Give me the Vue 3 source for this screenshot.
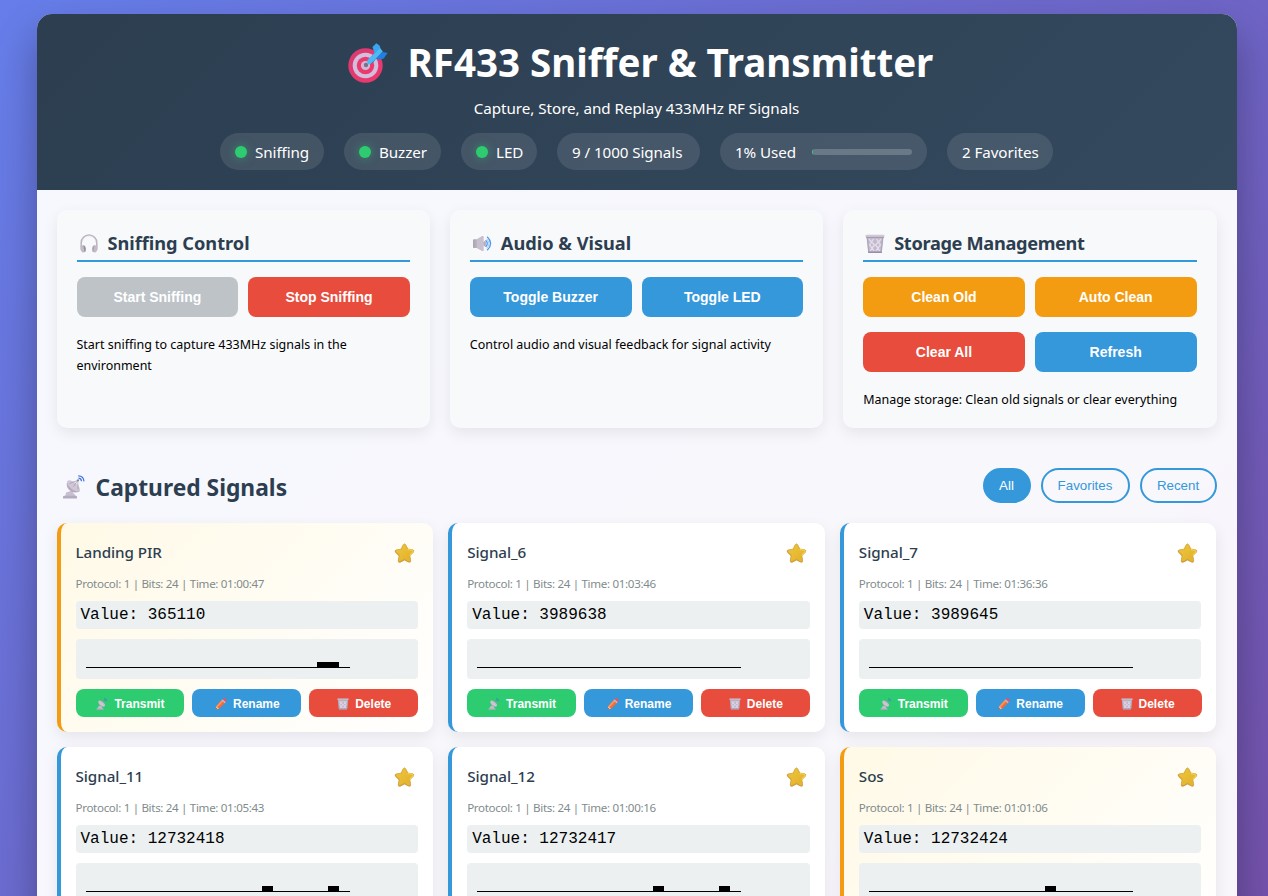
<script setup>
const statuses = [
  { label: 'Sniffing', width: 104, dot: true },
  { label: 'Buzzer', width: 97, dot: true },
  { label: 'LED', width: 76, dot: true },
  { label: '9 / 1000 Signals', width: 143 },
  { label: '1% Used', width: 207, bar: true },
  { label: '2 Favorites', width: 106 },
]

const panels = [
  {
    icon: 'headphones',
    title: 'Sniffing Control',
    rows: [[['Start Sniffing', 'disabled'], ['Stop Sniffing', 'danger']]],
    text: 'Start sniffing to capture 433MHz signals in the environment',
  },
  {
    icon: 'speaker',
    title: 'Audio & Visual',
    rows: [[['Toggle Buzzer', 'primary'], ['Toggle LED', 'primary']]],
    text: 'Control audio and visual feedback for signal activity',
  },
  {
    icon: 'bin',
    title: 'Storage Management',
    rows: [
      [['Clean Old', 'warning'], ['Auto Clean', 'warning']],
      [['Clear All', 'danger'], ['Refresh', 'primary']],
    ],
    text: 'Manage storage: Clean old signals or clear everything',
  },
]

const signals = [
  { name: 'Landing PIR', time: '01:00:47', value: 365110, favorite: true, pulses: [21, 22] },
  { name: 'Signal_6', time: '01:03:46', value: 3989638, pulses: [] },
  { name: 'Signal_7', time: '01:36:36', value: 3989645, pulses: [] },
  { name: 'Signal_11', time: '01:05:43', value: 12732418, pulses: [16, 22] },
  { name: 'Signal_12', time: '01:00:16', value: 12732417, pulses: [16, 22] },
  { name: 'Sos', time: '01:01:06', value: 12732424, favorite: true, pulses: [16] },
]
</script>

<template>
  <div class="page">
    <svg class="defs" aria-hidden="true">
      <defs>
        <linearGradient id="g-cone" x1="0" x2="1"><stop offset="0" stop-color="#aaa5b0" /><stop offset="1" stop-color="#d8d0de" /></linearGradient>
        <linearGradient id="g-star" x1="0" y1="0" x2="1" y2="1"><stop offset="0" stop-color="#efc63a" /><stop offset="1" stop-color="#e0b02c" /></linearGradient>
        <linearGradient id="g-ring" x1="0" y1="0" x2="1" y2="1"><stop offset="0" stop-color="#d83b72" /><stop offset="1" stop-color="#f0386c" /></linearGradient>
      </defs>
      <symbol id="target" viewBox="0 0 40 40">
        <circle cx="17.5" cy="22.5" r="17.2" fill="url(#g-ring)" />
        <circle cx="17.5" cy="22.5" r="12.8" fill="#d2bedd" />
        <circle cx="17.5" cy="22.5" r="8.7" fill="#ec3a6e" />
        <circle cx="17.5" cy="22.5" r="4.6" fill="#cdbbd6" />
        <circle cx="18" cy="22" r="2.2" fill="#7d6f88" />
        <path d="M19.500 17L26.500 10l-2-6L28.300.3l3.200 2.200 1.200 3.500-1.400 4.400-8.500 9.600z" fill="#3aa6f0" />
        <path d="M22.500 20.600l9-9.500 3.300-2 4.800.9-3.900 5.400-4 1.100-3.800-.6-3.200 4.200z" fill="#1f80e2" />
        <path d="M19.300 17.500L32 5.300l2.800 2.900L22.500 20.900q-4 1.200-3.200-3.400z" fill="#4fb9f2" />
      </symbol>
      <symbol id="headphones" viewBox="0 0 20 20">
        <path d="M2.200 13V8.800a7.800 7.800 0 0 1 15.600 0V13" fill="none" stroke="#b9b3be" stroke-width="1.500" />
        <path d="M3.200 8.600a6.800 6.800 0 0 1 13.600 0" fill="none" stroke="#ddd8e2" stroke-width=".6" />
        <path d="M1.300 12.200l3-1.200 2.200 6.600-2.600 1.200Q2 18 1.300 15z" fill="#c3bcc8" />
        <path d="M4.300 11.300q2.100-.3 2.500 3t-1.200 3.900z" fill="#968e9d" />
        <path d="M18.700 12.200l-3-1.200-2.200 6.600 2.600 1.200Q18 18 18.700 15z" fill="#c3bcc8" />
        <path d="M15.700 11.300q-2.100-.3-2.500 3t1.200 3.900z" fill="#aca4b3" />
      </symbol>
      <symbol id="speaker" viewBox="0 0 20 20">
        <path d="M1 6q0-.8.8-.8H5L10.300 2q1.200-.4 1.200.8v13.400q0 1.200-1.200.8L5 14H1.800Q1 14 1 13.200z" fill="url(#g-cone)" />
        <path d="M5 5.200L10.300 2q1.200-.4 1.200.8v13.400q0 1.200-1.200.8L5 14z" fill="#c9c0cf" />
        <ellipse cx="12.700" cy="9.600" rx="1.300" ry="2.700" fill="#b3aabc" />
        <path d="M13.600 6.200q3.400 3.300 0 6.700M15.200 2.800q6.800 6.700 0 13.500" fill="none" stroke="#4d98ee" stroke-width="1.300" />
        <path d="M14.700 4.900q4.600 4.700 0 9.400" fill="none" stroke="#8bbcf4" stroke-width=".8" />
      </symbol>
      <symbol id="bin" viewBox="0 0 20 20">
        <path d="M1.400 3h17.200l-1.800 16H3.200z" fill="#c3bacd" />
        <path d="M4 5.200l2.600 2.800L4.500 11l2.600 3-1.800 3M8.500 5l-2 3 3 3-2.500 3 2.200 3M11.500 5l2 3-3 3 2.500 3-2.200 3M16 5.200L13.400 8l2.100 3-2.600 3 1.800 3" fill="none" stroke="#e6e0ed" stroke-width="1.200" />
        <path d="M2.400 4l1.500 14.500M17.600 4l-1.500 14.500" stroke="#a79eb4" stroke-width=".8" />
        <path d="M3.200 17.600h13.600V19H3.200z" fill="#998dab" />
        <rect x=".6" y=".8" width="18.800" height="2.700" rx=".8" fill="#cfc8d5" />
        <path d="M1 3.400h18" stroke="#978fa1" stroke-width=".8" />
      </symbol>
      <symbol id="dish" viewBox="0 0 24 24">
        <path d="M4 17.500l5.500-1.800 4.300 5.300.7 1.200H3z" fill="#cabfd2" />
        <path d="M1 22q0-1.300 1.300-1.300h11.400q1.300 0 1.300 1.300v1.500H1z" fill="#b5abbe" />
        <path d="M5.300 6.400Q3.600 11 7 14.800t9.700 2.300q1.600-.9.800-2.500z" fill="#b5aabd" />
        <ellipse cx="11.400" cy="10.800" rx="7.700" ry="3.600" transform="rotate(39 11.400 10.800)" fill="#d0c6d8" />
        <path d="M7.500 8.500L15.800 5.400M15.800 5.400l.3 9M11.500 11.500l4.300-6.100" fill="none" stroke="#9f96a8" stroke-width=".7" />
        <circle cx="16" cy="5.300" r="1.100" fill="#8b8397" />
        <path d="M16.500 3.200q2.800.1 3 3.100M16.200.9q5.300-.1 5.800 5.500" fill="none" stroke="#3f74e3" stroke-width="1.200" />
      </symbol>
      <symbol id="pencil" viewBox="0 0 14 14">
        <path d="M8 2.300l3.700 3.500-7 6.600L.7 13.400l1-4.200z" fill="#f76a35" />
        <path d="M8 2.300l1.600 1.600-6.400 7-1.500-1.700z" fill="#ff9157" />
        <path d="M1.700 9.200l3 3.200-4 1z" fill="#efbd91" />
        <path d="M1.200 11.600l1.300 1.300-1.800.5z" fill="#51435a" />
        <path d="M7.800 2.500l1.200-1.100 3.600 3.400-1.200 1.200z" fill="#b9c1d0" />
        <path d="M9 1.400L10.300.4q.9-.5 1.800.2l1.300 1.300q.6.900 0 1.700l-1 1z" fill="#f0505f" />
      </symbol>
      <symbol id="star" viewBox="0 0 22 22">
        <path d="M9.700 1.900Q11 .1 12.200 1.900l2.300 4.500 5 .8q2.300.6.700 2.500l-3.600 3.600.8 5.200q.1 2.300-2 1.500L11 17.900l-4.500 2.200q-2.200.7-2-1.500l.8-5.100-3.600-3.700Q.1 7.900 2.400 7.300l5-.8z" fill="#cc9637" stroke="#cc9637" stroke-width=".8" />
        <path d="M10.200 1.700q.8-1 1.600.2l2.400 4.900 5 .8q1.600.5.600 1.700l-3.700 3.700.8 4.900q0 1.700-1.400 1.200L11 16.600l-4.500 2.300q-1.400.5-1.300-1.100l.8-5L2.300 9.100q-1-1.200.5-1.600l5-.8z" fill="url(#g-star)" stroke="#e8be35" stroke-width=".5" />
        <path d="M14.200 6.800l5 .8q1.600.5.600 1.700l-3.400 3.300" fill="none" stroke="#fae04e" stroke-width=".9" />
      </symbol>
    </svg>

    <main class="container">
      <header class="header">
        <h1><svg class="ico-target"><use href="#target" /></svg><span>RF433 Sniffer &amp; Transmitter</span></h1>
        <p class="subtitle">Capture, Store, and Replay 433MHz RF Signals</p>
        <div class="status-bar">
          <div v-for="s in statuses" :key="s.label" class="pill" :style="{ width: s.width + 'px' }">
            <i v-if="s.dot" class="dot"></i>
            <span>{{ s.label }}</span>
            <div v-if="s.bar" class="usage"><div class="usage-fill"></div></div>
          </div>
        </div>
      </header>

      <section class="panels">
        <article v-for="p in panels" :key="p.title" class="panel" :class="p.icon">
          <h3><svg class="ico-panel"><use :href="'#' + p.icon" /></svg><span>{{ p.title }}</span></h3>
          <div v-for="(row, r) in p.rows" :key="r" class="btn-row">
            <button v-for="[label, kind] in row" :key="label" class="btn" :class="kind">{{ label }}</button>
          </div>
          <p>{{ p.text }}</p>
        </article>
      </section>

      <section class="signals">
        <div class="signals-head">
          <h2><svg class="ico-dish"><use href="#dish" /></svg><span>Captured Signals</span></h2>
          <div class="filters">
            <button class="filter all active">All</button>
            <button class="filter fav">Favorites</button>
            <button class="filter rec">Recent</button>
          </div>
        </div>
        <div class="grid">
          <article v-for="s in signals" :key="s.name" class="card" :class="{ favorite: s.favorite }">
            <div class="card-head">
              <span class="name">{{ s.name }}</span>
              <svg class="ico-star"><use href="#star" /></svg>
            </div>
            <div class="meta">Protocol: 1 | Bits: 24 | Time: {{ s.time }}</div>
            <div class="value">Value: {{ s.value }}</div>
            <div class="wave">
              <svg width="264" height="20" shape-rendering="crispEdges">
                <rect x="0" y="18" width="264" height="1" />
                <rect v-for="i in s.pulses" :key="i" :x="i * 11" y="13" width="11" height="6" />
              </svg>
            </div>
            <div class="actions">
              <button class="act success"><svg class="ico-act"><use href="#dish" /></svg>Transmit</button>
              <button class="act primary"><svg class="ico-act"><use href="#pencil" /></svg>Rename</button>
              <button class="act danger"><svg class="ico-act"><use href="#bin" /></svg>Delete</button>
            </div>
          </article>
        </div>
      </section>
    </main>
  </div>
</template>

<style>
html, body { margin: 0; height: 896px; overflow: hidden; }
</style>

<style scoped>
* { box-sizing: border-box; margin: 0; }
svg { flex: none; display: block; }
.page {
  height: 896px;
  overflow: hidden;
  padding: 14px 31.500px 0 36.500px;
  background: linear-gradient(135deg, #667eea 0%, #764ba2 100%) 0 -6px / 100% 1240px no-repeat;
  font-family: "Noto Sans", "Open Sans", sans-serif;
  font-size: 15.200px;
  color: #000;
}
.defs { position: absolute; width: 0; height: 0; }
.container {
  width: 1200px;
  height: 1206px;
  border-radius: 15px;
  overflow: hidden;
  background: rgba(255, 255, 255, 0.95);
  box-shadow: 0 20px 40px rgba(0, 0, 0, 0.3);
}
.header {
  height: 176px;
  padding-top: 18px;
  background: linear-gradient(135deg, #2c3e50, #34495e);
  color: #fff;
  display: flex;
  flex-direction: column;
  align-items: center;
}
h1 { display: flex; align-items: center; width: 584px; height: 60px; font-size: 38.500px; line-height: 60px; white-space: nowrap; }
.ico-target { width: 40px; height: 40px; margin: 1px 20px 0 3px; }
.subtitle { height: 26px; line-height: 26px; margin-top: 3px; white-space: nowrap; letter-spacing: -0.040px; }
.status-bar { display: flex; gap: 20px; margin-top: 12px; height: 37px; }
.pill {
  display: flex;
  align-items: center;
  padding: 0 15px;
  border-radius: 20px;
  background: rgba(255, 255, 255, 0.1);
  white-space: nowrap;
}
.dot { flex: none; width: 12px; height: 12px; border-radius: 50%; margin-right: 8px; background: #2ecc71; box-shadow: 0 0 10px rgba(46, 204, 113, 0.5); }
.pill span { letter-spacing: -0.080px; }
.usage { width: 100px; height: 6px; border-radius: 3px; overflow: hidden; background: rgba(255, 255, 255, 0.2); margin-left: auto; }
.usage-fill { width: 1%; height: 100%; background: #2ecc71; }

.panels { display: grid; grid-template-columns: repeat(3, 1fr); gap: 20px; padding: 20px; }
.panel { height: 218px; padding: 20px; border-radius: 10px; background: #f8f9fb; box-shadow: 0 5px 15px rgba(0, 0, 0, 0.08); }
h3 { display: flex; align-items: center; height: 32px; margin-bottom: 15px; padding-bottom: 3px; border-bottom: 2px solid #3498db; color: #2c3e50; font-size: 18.200px; line-height: 27px; white-space: nowrap; }
.bin h3 { letter-spacing: -0.330px; }
.ico-panel { width: 20px; height: 20px; margin: 0 9px 0 2px; }
.btn-row { display: flex; gap: 10px; margin-bottom: 15px; }
.btn, .act, .filter { border: none; color: #fff; font-family: "Liberation Sans", Arial, sans-serif; white-space: nowrap; }
.btn { flex: 1; height: 40px; border-radius: 8px; font-size: 14px; font-weight: 700; }
.primary { background: #3498db; }
.danger { background: #e74c3c; }
.warning { background: #f39c12; }
.success { background: #2ecc71; }
.disabled { background: #bdc3c7; }
.panel p { font-size: 12.480px; line-height: 20.800px; padding-top: 3px; }

.signals { padding: 20px; }
.signals-head { display: flex; justify-content: space-between; height: 35px; margin-bottom: 20px; }
h2 { display: flex; align-items: center; height: 38px; color: #2c3e50; font-size: 22.800px; white-space: nowrap; }
.ico-dish { width: 24px; height: 24px; margin: 0 10px 0 5px; }
.filters { display: flex; gap: 10px; }
.filter { height: 35px; border: 2px solid #3498db; border-radius: 20px; background: transparent; color: #3498db; font-size: 13.333px; padding: 0; }
.filter.active { background: #3498db; color: #fff; }
.all { width: 48px; }
.fav { width: 89px; }
.rec { width: 77px; }
.grid { display: grid; grid-template-columns: repeat(3, 1fr); gap: 15px; }
.card {
  height: 209px;
  padding: 15px;
  border-left: 4px solid #3498db;
  border-radius: 10px;
  background: #fff;
  box-shadow: 0 5px 15px rgba(0, 0, 0, 0.08);
}
.card.favorite { border-left-color: #f39c12; background: linear-gradient(135deg, #fff9e6, #fff); }
.card-head { display: flex; justify-content: space-between; align-items: center; height: 30px; padding-right: 3px; }
.name { font-weight: 500; color: #2c3e50; letter-spacing: -0.050px; position: relative; top: -1px; }
.ico-star { width: 21px; height: 21px; }
.meta { height: 19px; line-height: 19px; margin: 6px 0 8px; font-size: 11.600px; letter-spacing: -0.330px; color: #7f8c8d; white-space: nowrap; }
.value { height: 28px; line-height: 29px; padding: 0 5px; border-radius: 4px; background: #ecf0f1; font-family: "Liberation Mono", "Courier New", monospace; font-size: 16px; }
.wave { height: 40px; margin: 10px 0; padding: 10px; border-radius: 4px; background: #ecf0f1; }
.actions { display: flex; gap: 8px; }
.act { flex: 1; height: 28px; border-radius: 8px; display: flex; align-items: center; justify-content: center; padding: 1px 0 0 1px; font-size: 12px; font-weight: 700; }
.ico-act { width: 12px; height: 12px; margin-right: 6px; }
</style>
